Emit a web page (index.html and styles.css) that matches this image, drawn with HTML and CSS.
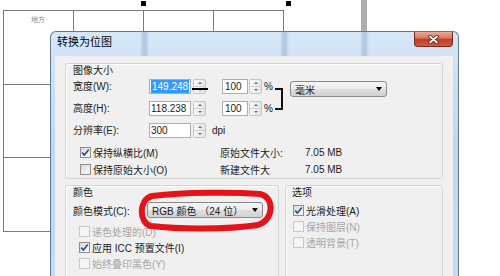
FILE: index.html
```html
<!DOCTYPE html>
<html lang="zh-CN">
<head>
    <meta charset="UTF-8">
    <title>转换为位图</title>
    <link rel="stylesheet" href="styles.css">
</head>
<body>

    <!-- page underneath the dialog -->
    <div class="sheet">
        <div class="cell"><span class="cell-text">地方</span></div>
        <div class="cell"></div><div class="cell"></div><div class="cell"></div>
        <div class="cell"></div><div class="cell"></div><div class="cell"></div><div class="cell"></div>
        <div class="cell"></div><div class="cell"></div><div class="cell"></div><div class="cell"></div>
    </div>
    <span class="handle handle-a"></span>
    <span class="handle handle-b"></span>
    <span class="guide"></span>

    <!-- Convert to bitmap dialog -->
    <div class="dialog">
        <div class="titlebar">
            <span class="title">转换为位图</span>
            <span class="close">
                <svg width="11" height="9" viewBox="0 0 11 9">
                    <path d="M2 1.5 L9 7.5 M9 1.5 L2 7.5" stroke="#5a1a10" stroke-width="3.4" stroke-linecap="round"/>
                    <path d="M2 1.5 L9 7.5 M9 1.5 L2 7.5" stroke="#fff" stroke-width="1.8" stroke-linecap="round"/>
                </svg>
            </span>
        </div>

        <div class="client">
            <div class="group size-group">
                <div class="group-label">图像大小</div>
                <div class="size-grid">
                    <span class="row-label">宽度(W):</span>
                    <div class="spin spin-main linked">
                        <span class="field"><span class="sel">149.248</span></span>
                        <span class="btns"><i class="up"></i><i class="down"></i></span>
                    </div>
                    <div class="spin spin-pct col-pct">
                        <span class="field">100</span>
                        <span class="btns"><i class="up"></i><i class="down"></i></span>
                    </div>
                    <span class="pct">%</span>
                    <span class="bracket"></span>
                    <div class="combo unit"><span>毫米</span><i class="arrow"></i></div>

                    <span class="row-label">高度(H):</span>
                    <div class="spin spin-main">
                        <span class="field">118.238</span>
                        <span class="btns"><i class="up"></i><i class="down"></i></span>
                    </div>
                    <div class="spin spin-pct col-pct">
                        <span class="field">100</span>
                        <span class="btns"><i class="up"></i><i class="down"></i></span>
                    </div>
                    <span class="pct">%</span>

                    <span class="row-label">分辨率(E):</span>
                    <div class="spin spin-main">
                        <span class="field">300</span>
                        <span class="btns"><i class="up"></i><i class="down"></i></span>
                    </div>
                    <span class="dpi">dpi</span>
                </div>

                <div class="size-info">
                    <span class="check">
                        <span class="box"><svg width="9" height="9" viewBox="0 0 9 9"><path d="M1.2 4.6 L3.4 7 L7.8 1.6" fill="none" stroke="#2b4c86" stroke-width="1.6"/></svg></span>
                        保持纵横比(M)
                    </span>
                    <span>原始文件大小:</span>
                    <span>7.05 MB</span>
                    <span class="check">
                        <span class="box"></span>
                        保持原始大小(O)
                    </span>
                    <span>新建文件大</span>
                    <span>7.05 MB</span>
                </div>
            </div>

            <div class="lower">
                <div class="group color-group">
                    <div class="group-label">颜色</div>
                    <div class="mode-row">
                        <span class="mode-label">颜色模式(C):</span>
                        <div class="combo mode"><span>RGB 颜色 （24 位）</span><i class="arrow"></i></div>
                    </div>
                    <div class="checks">
                        <span class="check off"><span class="box"></span>递色处理的(D)</span>
                        <span class="check">
                            <span class="box"><svg width="9" height="9" viewBox="0 0 9 9"><path d="M1.2 4.6 L3.4 7 L7.8 1.6" fill="none" stroke="#2b4c86" stroke-width="1.6"/></svg></span>
                            应用 ICC 预置文件(I)
                        </span>
                        <span class="check off"><span class="box"></span>始终叠印黑色(Y)</span>
                    </div>
                </div>

                <div class="group option-group">
                    <div class="group-label">选项</div>
                    <div class="checks">
                        <span class="check">
                            <span class="box"><svg width="9" height="9" viewBox="0 0 9 9"><path d="M1.2 4.6 L3.4 7 L7.8 1.6" fill="none" stroke="#2b4c86" stroke-width="1.6"/></svg></span>
                            光滑处理(A)
                        </span>
                        <span class="check off"><span class="box"></span>保持图层(N)</span>
                        <span class="check off"><span class="box"></span>透明背景(T)</span>
                    </div>
                </div>
            </div>
        </div>
    </div>

    <!-- red hand-drawn mark -->
    <svg class="mark" width="142" height="48" viewBox="0 0 142 48">
        <path d="M16 8 C49 4 99 4 124 6 C139 9 138 32 122 37 C89 42 39 41 15 38 C3 35 2 12 16 8 Z"
              fill="none" stroke="#e5121a" stroke-width="6" stroke-linejoin="round"/>
    </svg>

</body>
</html>
```

FILE: styles.css
```css
body {
    margin: 0;
    width: 500px;
    height: 276px;
    overflow: hidden;
    position: relative;
    background: #fff;
    font-family: "Liberation Sans", "Noto Sans CJK SC", sans-serif;
    font-size: 10px;
    color: #1b1b1b;
}

/* background table */
.sheet {
    position: absolute;
    left: 3px;
    top: 10px;
    display: grid;
    grid-template-columns: repeat(4, 70px);
    grid-template-rows: 74px 73px 74px;
    border-left: 1px solid #7a7a7a;
    border-top: 1px solid #7a7a7a;
}
.cell {
    border-right: 1px solid #7a7a7a;
    border-bottom: 1px solid #7a7a7a;
}
.cell-text {
    display: block;
    padding: 3px 0 0 27px;
    font-size: 7px;
    color: #8a8a8a;
}
.handle {
    position: absolute;
    top: 1px;
    width: 5px;
    height: 5px;
    background: #000;
}
.handle-a { left: 141px; }
.handle-b { left: 286px; }
.guide {
    position: absolute;
    left: 361px;
    top: 0;
    width: 6px;
    height: 32px;
    background: #adadad;
}

/* dialog window, cut by the bottom of the screenshot */
.dialog {
    position: absolute;
    left: 50px;
    top: 31px;
    width: 409px;
    height: 245px;
    overflow: hidden;
    box-sizing: border-box;
    border: 1px solid #62788f;
    border-bottom: 0;
    border-radius: 6px 6px 0 0;
    padding: 0 5px 0 4px;
    background:
        linear-gradient(90deg, transparent 89px, rgba(80, 120, 165, .25) 92px, rgba(80, 120, 165, .25) 95px, transparent 98px),
        linear-gradient(90deg, transparent 229px, rgba(80, 120, 165, .25) 232px, rgba(80, 120, 165, .25) 235px, transparent 238px),
        linear-gradient(90deg, transparent 309px, rgba(80, 120, 165, .25) 312px, rgba(80, 120, 165, .25) 315px, transparent 318px),
        linear-gradient(#d6e7f8, #bfd7ee 45%, #c4daf0);
}
.titlebar {
    display: flex;
    justify-content: space-between;
    align-items: flex-start;
    height: 24px;
    margin-right: -5px;
}
.title {
    padding: 3px 0 0 2px;
    font-size: 11px;
    line-height: 14px;
    color: #000;
}
.close {
    width: 39px;
    height: 15px;
    margin-right: 5px;
    box-sizing: border-box;
    border: 1px solid #7d2a1c;
    border-top: 0;
    border-radius: 0 0 4px 4px;
    background: linear-gradient(#eaab9c, #d87260 45%, #c13a25 50%, #d4573f);
    display: flex;
    align-items: center;
    justify-content: center;
}
.client {
    height: 220px;
    box-sizing: border-box;
    overflow: hidden;
    background: #f0f0f0;
    padding: 7px 10px 0;
}

/* group boxes */
.group {
    border: 1px solid #d5d5d5;
    border-radius: 3px;
    box-shadow: inset 1px 1px 0 #fff;
    padding: 0 7px;
}
.group-label {
    margin-top: 1px;
    height: 12px;
    line-height: 12px;
}

.size-grid {
    display: grid;
    grid-template-columns: 76px 57px 16px 40px 13px 15px 97px;
    grid-template-rows: 15px 15px 15px;
    row-gap: 7px;
    margin-top: 2px;
    align-items: center;
}
.row-label { grid-column: 1; line-height: 15px; }
.col-pct { grid-column: 4; }
.pct { grid-column: 5; padding-left: 2px; }
.dpi { grid-column: 3 / 5; padding-left: 6px; }
.bracket {
    grid-column: 6;
    grid-row: 1 / 3;
    align-self: stretch;
    margin: 9px 7px 6px 0;
    border: 2px solid #111;
    border-left: 0;
}

.spin {
    display: flex;
    height: 15px;
}
.field {
    box-sizing: border-box;
    height: 15px;
    border: 1px solid #abadb3;
    background: #fff;
    padding: 0 1px;
    line-height: 13px;
    overflow: hidden;
    white-space: nowrap;
}
.spin-main .field { width: 42px; }
.spin-pct .field { width: 26px; padding-left: 2px; }
.sel {
    display: inline-block;
    background: #3399ff;
    color: #fff;
    padding: 0 1px;
}
.btns {
    position: relative;
    display: flex;
    flex-direction: column;
    width: 13px;
    margin-left: 2px;
    box-sizing: border-box;
    border: 1px solid #c6c6c6;
    border-radius: 2px;
    background: linear-gradient(90deg, #f8f8f8, #e4e4e4);
}
.spin-pct .btns { margin-left: 1px; }
.btns i {
    flex: 1;
    display: flex;
    align-items: center;
    justify-content: center;
}
.btns i + i { border-top: 1px solid #d2d2d2; }
.up::after {
    content: "";
    border-left: 2px solid transparent;
    border-right: 2px solid transparent;
    border-bottom: 2px solid #5d6f8e;
}
.down::after {
    content: "";
    border-left: 2px solid transparent;
    border-right: 2px solid transparent;
    border-top: 2px solid #5d6f8e;
}
.linked .btns::after {
    content: "";
    position: absolute;
    left: -2px;
    right: -3px;
    top: 8px;
    height: 2px;
    background: #000;
}

.combo {
    box-sizing: border-box;
    display: flex;
    align-items: center;
    justify-content: space-between;
    height: 16px;
    border: 1px solid #8b8b8b;
    border-radius: 3px;
    padding: 0 4px;
    background: linear-gradient(#f4f4f4, #ececec 50%, #dedede 50%, #d2d2d2);
    white-space: nowrap;
}
.arrow {
    border-left: 3px solid transparent;
    border-right: 3px solid transparent;
    border-top: 4px solid #000;
}
.unit {
    grid-column: 7;
    grid-row: 1;
    align-self: start;
    margin-top: 2px;
}

.size-info {
    display: grid;
    grid-template-columns: 147px 85px auto;
    grid-auto-rows: 17px;
    align-items: center;
    margin-top: 6px;
}

/* checkboxes */
.check {
    display: flex;
    align-items: center;
    gap: 2px;
    padding-left: 7px;
    white-space: nowrap;
}
.box {
    box-sizing: border-box;
    width: 11px;
    height: 11px;
    border: 1px solid #8e8f8f;
    background: linear-gradient(135deg, #dadada, #fbfbfb);
    display: flex;
    align-items: center;
    justify-content: center;
}
.check.off { color: #a6a6a6; }
.check.off .box {
    border-color: #c8c8c8;
    background: #f5f5f5;
}

.lower {
    display: grid;
    grid-template-columns: 214px 1fr;
    column-gap: 6px;
    margin-top: 6px;
}
.lower .group { height: 100px; }

.mode-row {
    display: flex;
    align-items: center;
    height: 16px;
    margin-top: 3px;
}
.mode-label { width: 74px; }
.mode { width: 116px; }
.color-group .checks { margin-top: 5px; }
.checks .check {
    height: 16px;
    padding-left: 6px;
}

.option-group { padding: 0 6px; }
.option-group .checks { margin-top: 3px; }
.option-group .check { padding-left: 1px; }

.mark {
    position: absolute;
    left: 136px;
    top: 188px;
}
```
